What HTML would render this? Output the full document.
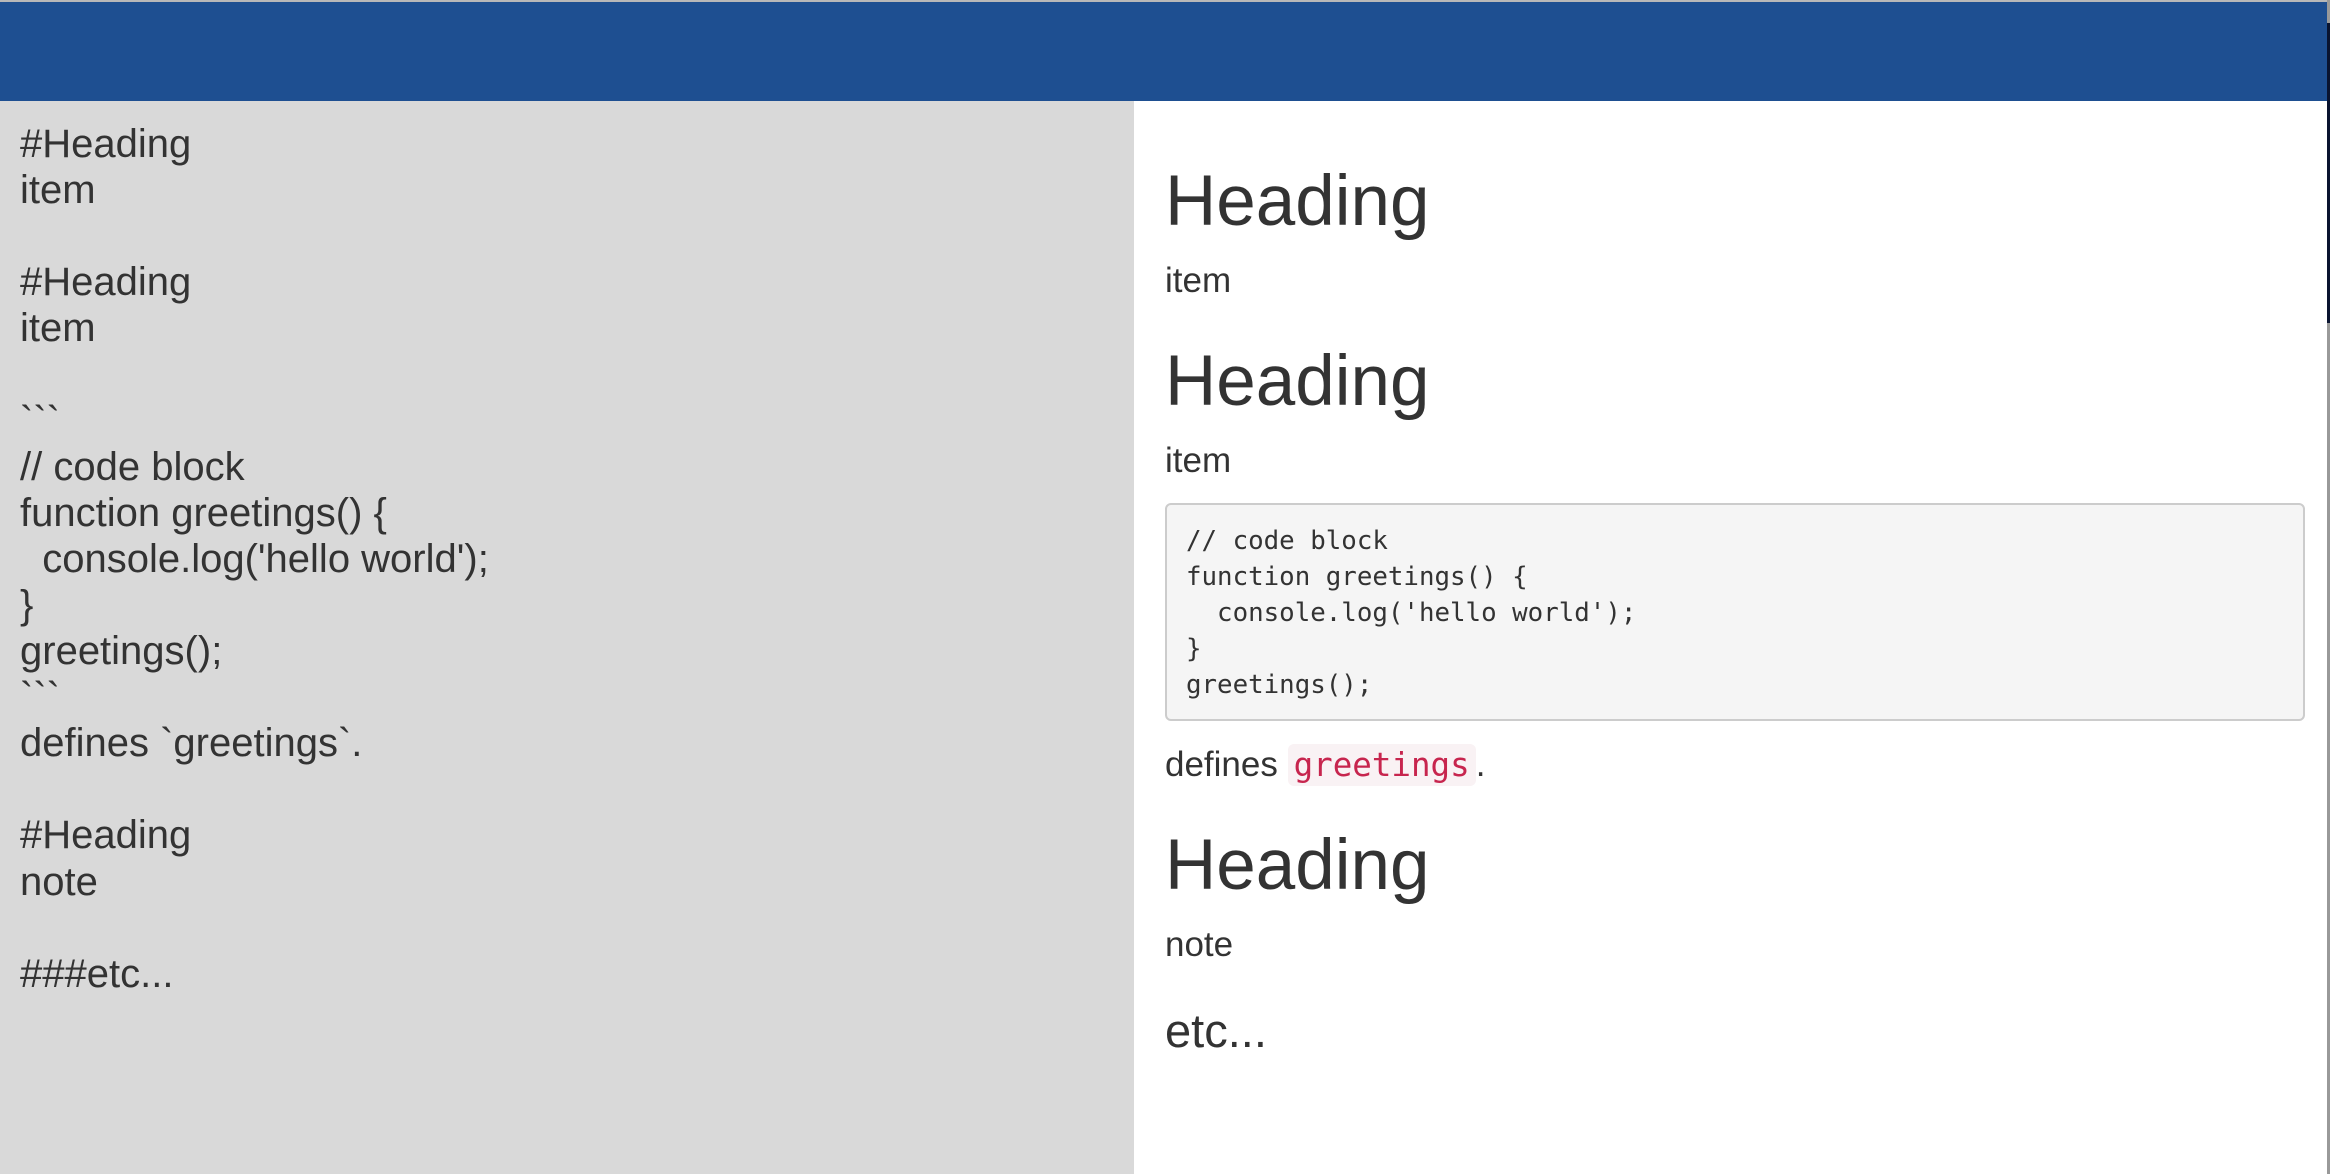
<!DOCTYPE html>
<html><head><meta charset="utf-8"><style>
html,body{margin:0;padding:0;width:2330px;height:1174px;overflow:hidden;background:#fff;font-family:"Liberation Sans",Arial,sans-serif;color:#333}
.top{position:absolute;left:0;top:0;width:2330px;height:2px;background:#b8b8b8}
.bar{position:absolute;left:0;top:2px;width:2330px;height:99px;background:#1e4f91}
.left{position:absolute;left:0;top:101px;width:1134px;height:1073px;background:#d9d9d9}
.src{position:absolute;left:20px;top:20px;margin:0;font-family:"Liberation Sans",Arial,sans-serif;font-size:40px;line-height:46.1px;white-space:pre;color:#333}
.r{position:absolute;left:1165px;white-space:nowrap}
.h{font-size:71px;line-height:78px}
.p{font-size:35px;line-height:50px}
.code{position:absolute;left:1165px;top:503px;width:1140px;height:218px;box-sizing:border-box;border:2px solid #ccc;border-radius:6px;background:#f5f5f5}
.code pre{margin:0;position:absolute;left:19px;top:18px;font-family:"DejaVu Sans Mono","Liberation Mono",monospace;font-size:25.8px;line-height:36px;color:#333}
.ic{font-family:"DejaVu Sans Mono","Liberation Mono",monospace;font-size:32.5px;color:#c7254e;background:#f9f2f4;border-radius:6px;padding:2px 6px}
.edge{position:absolute;left:2327px;top:0;width:3px;height:1174px;background:#999}
.edge2{position:absolute;left:2327px;top:23px;width:3px;height:300px;background:#0a1430}
</style></head><body>
<div class="top"></div>
<div class="bar"></div>
<div class="left"><pre class="src">#Heading
item

#Heading
item

&#96;&#96;&#96;
// code block
function greetings() {
  console.log('hello world');
}
greetings();
&#96;&#96;&#96;
defines &#96;greetings&#96;.

#Heading
note

###etc...</pre></div>
<div class="r h" style="top:163px">Heading</div>
<div class="r p" style="top:256px">item</div>
<div class="r h" style="top:343px">Heading</div>
<div class="r p" style="top:436px">item</div>
<div class="code"><pre>// code block
function greetings() {
  console.log('hello world');
}
greetings();</pre></div>
<div class="r p" style="top:740px">defines <span class="ic">greetings</span>.</div>
<div class="r h" style="top:827px">Heading</div>
<div class="r p" style="top:920px">note</div>
<div class="r" style="top:1001px;font-size:47px;line-height:60px">etc...</div>
<div class="edge"></div><div class="edge2"></div>
</body></html>
